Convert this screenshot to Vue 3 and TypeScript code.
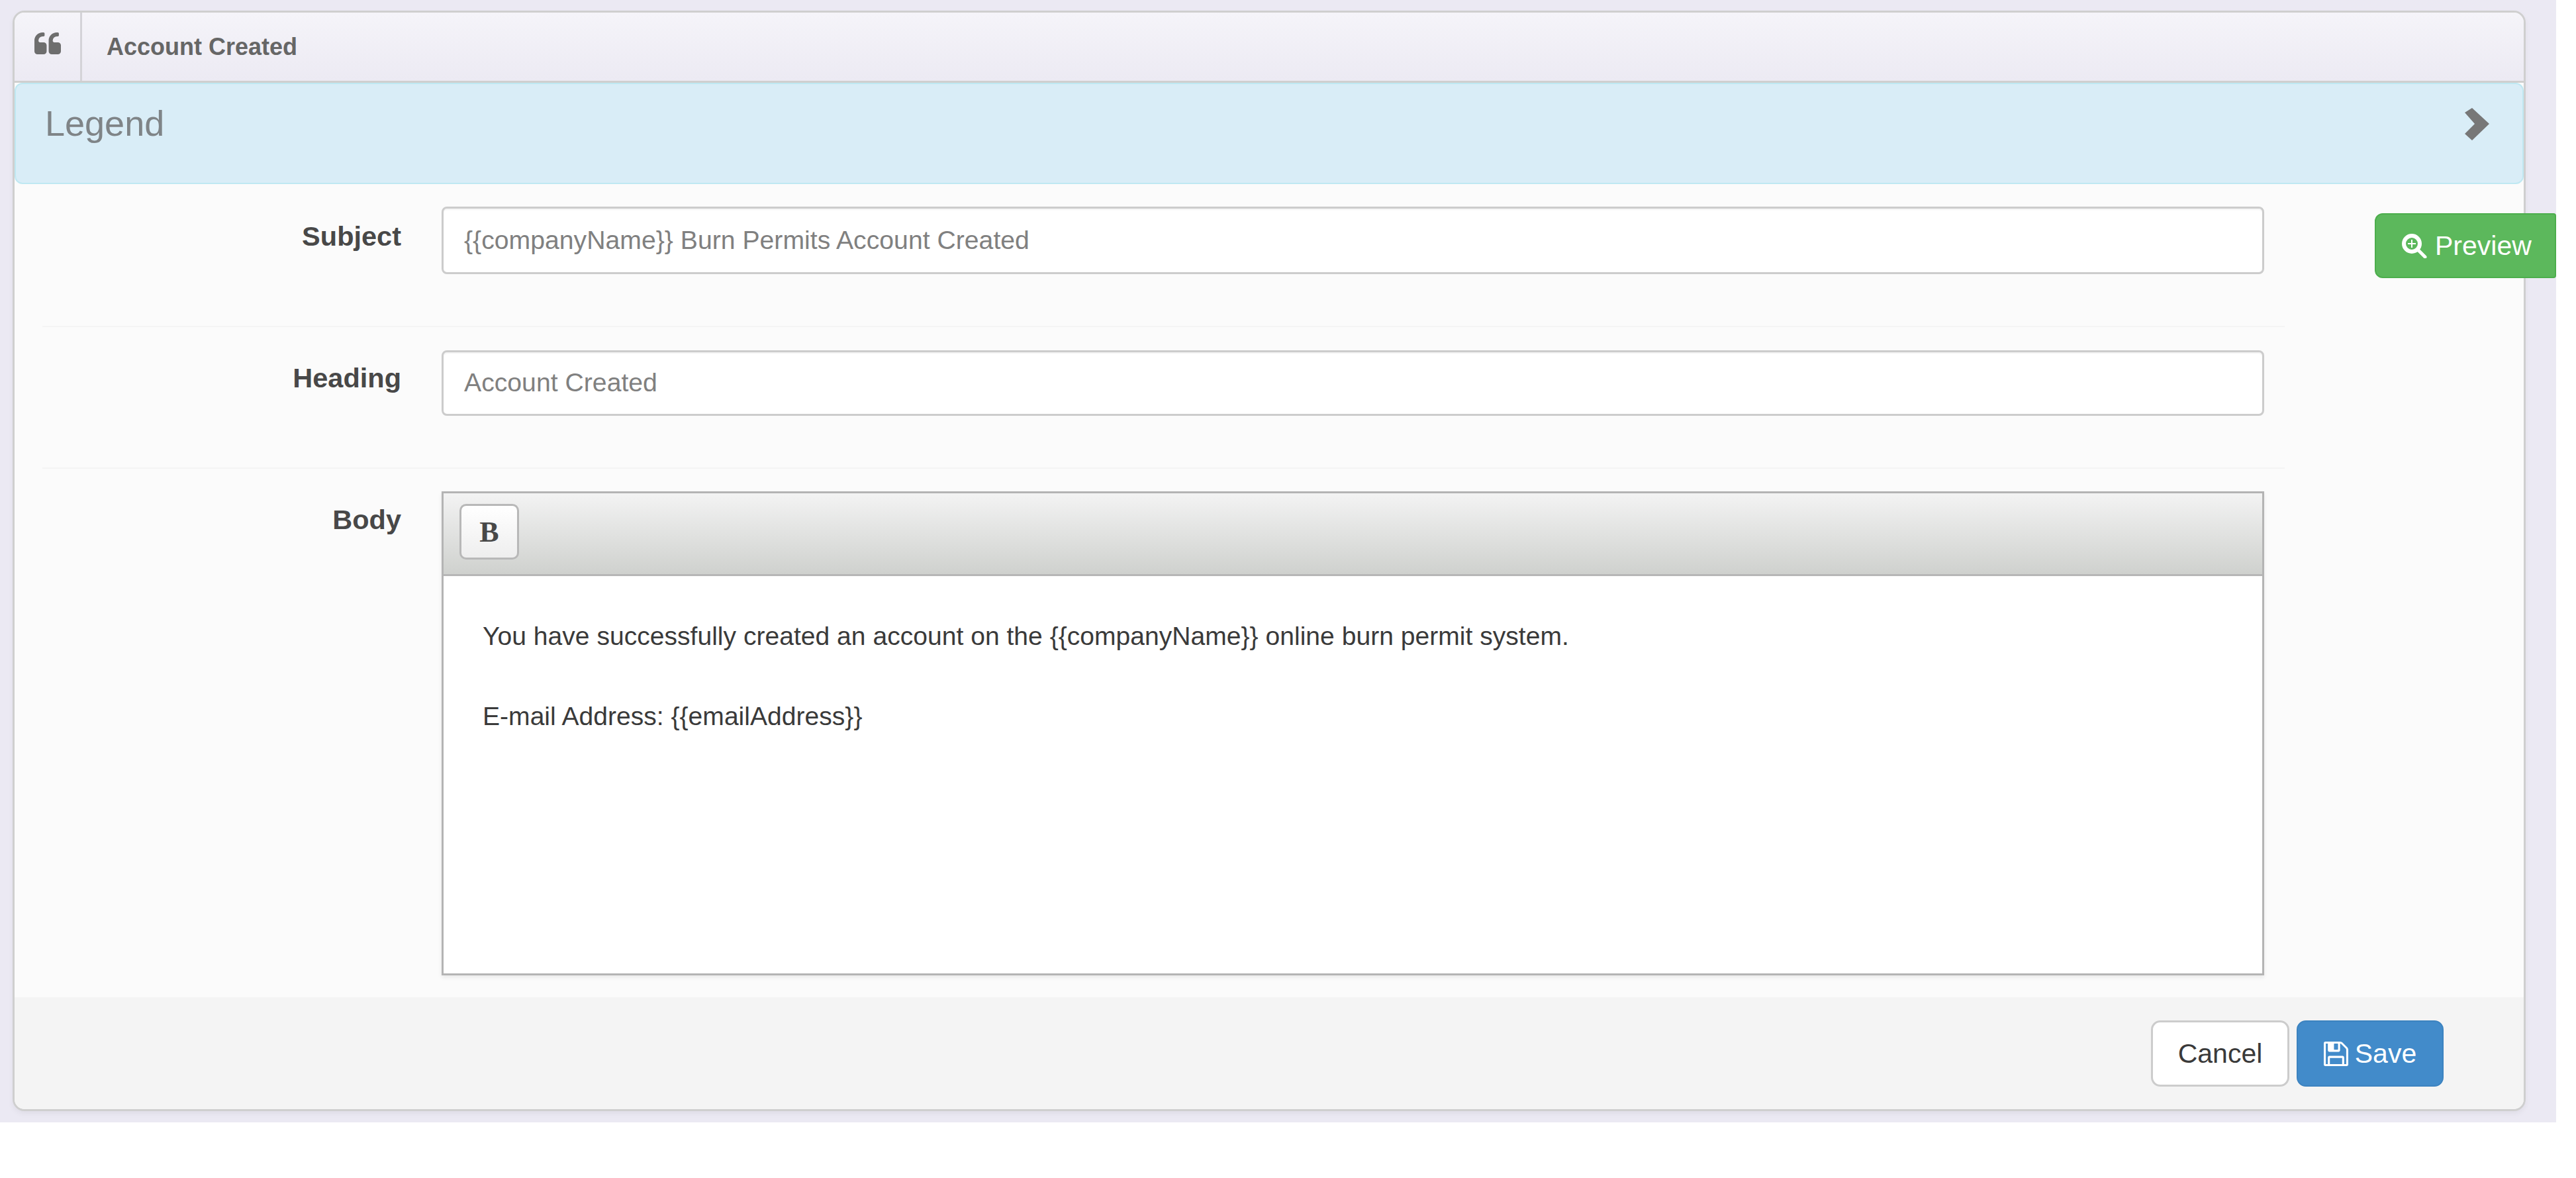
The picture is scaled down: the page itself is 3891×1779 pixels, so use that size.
<script setup lang="ts">
const bodyLines: string[] = [
  'You have successfully created an account on the {{companyName}} online burn permit system.',
  'E-mail Address: {{emailAddress}}',
]
</script>

<template>
  <div class="page">
    <section class="card">
      <header class="card-head">
        <div class="head-icon">
          <svg class="quote" viewBox="0 128 1664 1408" preserveAspectRatio="none" aria-hidden="true">
            <path d="M768 960v384q0 80-56 136t-136 56h-384q-80 0-136-56t-56-136v-704q0-104 40.5-198.5t109.5-163.5 163.5-109.5 198.5-40.5h64q26 0 45 19t19 45v128q0 26-19 45t-45 19h-64q-106 0-181 75t-75 181v32q0 40 28 68t68 28h224q80 0 136 56t56 136zm896 0v384q0 80-56 136t-136 56h-384q-80 0-136-56t-56-136v-704q0-104 40.5-198.5t109.5-163.5 163.5-109.5 198.5-40.5h64q26 0 45 19t19 45v128q0 26-19 45t-45 19h-64q-106 0-181 75t-75 181v32q0 40 28 68t68 28h224q80 0 136 56t56 136z" />
          </svg>
        </div>
        <h1 class="head-title">Account Created</h1>
      </header>

      <div class="legend">
        <span class="legend-title">Legend</span>
        <svg class="chevron" viewBox="0 0 37 49" aria-hidden="true">
          <polygon points="0,7 11,0 37,24 11,49 0,39 15,24" />
        </svg>
      </div>

      <div class="form">
        <div class="row row-first row-rule">
          <label class="label label-first">Subject</label>
          <div class="field field-tall" role="textbox">&#123;&#123;companyName&#125;&#125; Burn Permits Account Created</div>
        </div>
        <div class="row row-rule">
          <label class="label">Heading</label>
          <div class="field" role="textbox">Account Created</div>
        </div>
        <div class="row row-editor">
          <label class="label">Body</label>
          <div class="editor">
            <div class="toolbar">
              <button class="bold-btn" type="button">B</button>
            </div>
            <div class="editor-body">
              <p v-for="line in bodyLines" :key="line">{{ line }}</p>
            </div>
          </div>
        </div>
      </div>

      <footer class="card-foot">
        <button class="btn btn-cancel" type="button">Cancel</button>
        <button class="btn btn-save" type="button">
          <svg class="save-icon" viewBox="128 128 1536 1536" aria-hidden="true">
            <path d="M512 1536h768v-384h-768v384zm896 0h128v-896q0-14-10-38.5t-20-34.5l-281-281q-10-10-34-20t-39-10v416q0 40-28 68t-68 28h-576q-40 0-68-28t-28-68v-416h-128v1280h128v-416q0-40 28-68t68-28h832q40 0 68 28t28 68v416zm-384-928v-320q0-13-9.5-22.5t-22.5-9.5h-192q-13 0-22.5 9.5t-9.5 22.5v320q0 13 9.5 22.5t22.5 9.5h192q13 0 22.5-9.5t9.5-22.5zm640 32v928q0 40-28 68t-68 28h-1344q-40 0-68-28t-28-68v-1344q0-40 28-68t68-28h928q40 0 88 20t76 48l280 280q28 28 48 76t20 88z" />
          </svg>
          Save
        </button>
      </footer>
    </section>

    <button class="preview" type="button">
      <svg class="preview-icon" viewBox="0 0 39 37" aria-hidden="true">
        <circle cx="16" cy="15" r="12" fill="none" stroke="#fff" stroke-width="6" />
        <path d="M16 9v12M10 15h12" stroke="#fff" stroke-width="2" fill="none" />
        <path d="M25 24l11 11" stroke="#fff" stroke-width="5" stroke-linecap="round" fill="none" />
      </svg>
      Preview
    </button>
  </div>
</template>

<style>
html,
body {
  margin: 0;
  background: #fff;
}
</style>

<style scoped>
.page {
  position: relative;
  box-sizing: border-box;
  width: 3861px;
  height: 1695px;
  padding: 16px 46px 17px 19px;
  background: #ebe9f3;
  font-family: "Liberation Sans", Arial, sans-serif;
}

.card {
  display: flex;
  flex-direction: column;
  box-sizing: border-box;
  height: 100%;
  border: 3px solid #cfcfcf;
  border-radius: 18px;
  overflow: hidden;
  background: #fbfbfb;
  box-shadow: 0 4px 8px rgba(0, 0, 0, 0.05);
}

.card-head {
  display: flex;
  flex: none;
  align-items: stretch;
  box-sizing: border-box;
  height: 106px;
  border-bottom: 3px solid #cfcfcf;
  background: linear-gradient(#f5f4f9, #eceaf3);
}

.head-icon {
  display: flex;
  flex: none;
  align-items: center;
  justify-content: center;
  box-sizing: border-box;
  width: 102px;
  padding-bottom: 10px;
  border-right: 3px solid #d4d3d8;
}

.quote {
  width: 40px;
  height: 33px;
  fill: #6e6e6e;
}

.head-title {
  margin: 0 0 0 37px;
  align-self: center;
  color: #666;
  font-size: 36px;
  font-weight: 700;
  line-height: 1;
}

.legend {
  display: flex;
  flex: none;
  align-items: flex-start;
  justify-content: space-between;
  box-sizing: border-box;
  height: 153px;
  padding: 29px 50px 0 44px;
  border: 2px solid #bfe8f2;
  border-radius: 12px;
  background: #d9edf7;
}

.legend-title {
  color: #7f8487;
  font-size: 54px;
  line-height: 60px;
}

.chevron {
  width: 37px;
  height: 49px;
  margin-top: 7px;
  fill: #777;
}

.form {
  flex: 1;
  padding: 0 361px 0 42px;
}

.row {
  display: flex;
  align-items: flex-start;
  padding: 35px 31px 33px 0;
}

.row-first {
  padding-top: 34px;
}

.row-editor {
  padding-top: 34px;
}

.row-rule {
  padding-bottom: 78px;
  border-bottom: 2px solid #f4f4f4;
}

.label {
  flex: none;
  box-sizing: border-box;
  width: 542px;
  padding-top: 19px;
  color: #484848;
  font-size: 41.5px;
  font-weight: 700;
  line-height: 46px;
  text-align: right;
}

.label-first {
  padding-top: 22px;
}

.row-editor .label {
  padding-top: 20px;
}

.field {
  flex: 1;
  box-sizing: border-box;
  height: 99px;
  margin-left: 61px;
  padding: 0 31px;
  border: 3px solid #ccc;
  border-radius: 8px;
  background: #fff;
  box-shadow: inset 0 2px 2px rgba(0, 0, 0, 0.05);
  color: #808080;
  font-size: 39.2px;
  line-height: 92px;
}

.field-tall {
  height: 102px;
  line-height: 96px;
}

.editor {
  display: flex;
  flex: 1;
  flex-direction: column;
  box-sizing: border-box;
  height: 731px;
  margin-left: 61px;
  border: 3px solid #b4b4b4;
  background: #fff;
  box-shadow: 0 3px 6px rgba(0, 0, 0, 0.08);
}

.toolbar {
  display: flex;
  flex: none;
  align-items: flex-start;
  box-sizing: border-box;
  height: 125px;
  padding: 16px 0 0 24px;
  border-bottom: 3px solid #b6b6b6;
  background: linear-gradient(#f3f3f3, #cfd1ce);
}

.bold-btn {
  box-sizing: border-box;
  width: 90px;
  height: 84px;
  padding: 0;
  border: 3px solid #b8b8b8;
  border-radius: 10px;
  background: linear-gradient(#fff, #eee);
  color: #484848;
  font-family: "Liberation Serif", "Times New Roman", serif;
  font-size: 44px;
  font-weight: 700;
}

.editor-body {
  flex: 1;
  padding: 69px 59px 0;
  color: #3a3a3a;
  font-size: 39.1px;
}

.editor-body p {
  margin: 0 0 78px;
  line-height: 43px;
}

.card-foot {
  display: flex;
  flex: none;
  align-items: flex-start;
  justify-content: flex-end;
  gap: 11px;
  box-sizing: border-box;
  height: 170px;
  padding: 35px 121px 0 0;
  background: #f4f4f4;
}

.btn {
  box-sizing: border-box;
  height: 100px;
  padding: 0;
  border-radius: 14px;
  font-family: inherit;
  font-size: 41px;
}

.btn-cancel {
  width: 209px;
  border: 3px solid #ccc;
  background: #fff;
  color: #3a3a3a;
}

.btn-save {
  display: flex;
  align-items: center;
  justify-content: center;
  gap: 10px;
  width: 222px;
  border: 2px solid #3c83c0;
  background: #428bca;
  color: #fff;
}

.save-icon {
  width: 37px;
  height: 37px;
  fill: #fff;
}

.preview {
  position: absolute;
  top: 322px;
  right: 0;
  display: flex;
  align-items: center;
  gap: 12px;
  box-sizing: border-box;
  width: 274px;
  height: 98px;
  padding: 0 0 0 38px;
  border: 2px solid #4cae4c;
  border-radius: 12px 4px 4px 12px;
  background: #5cb85c;
  color: #fff;
  font-family: inherit;
  font-size: 41px;
}

.preview-icon {
  width: 39px;
  height: 37px;
}
</style>
